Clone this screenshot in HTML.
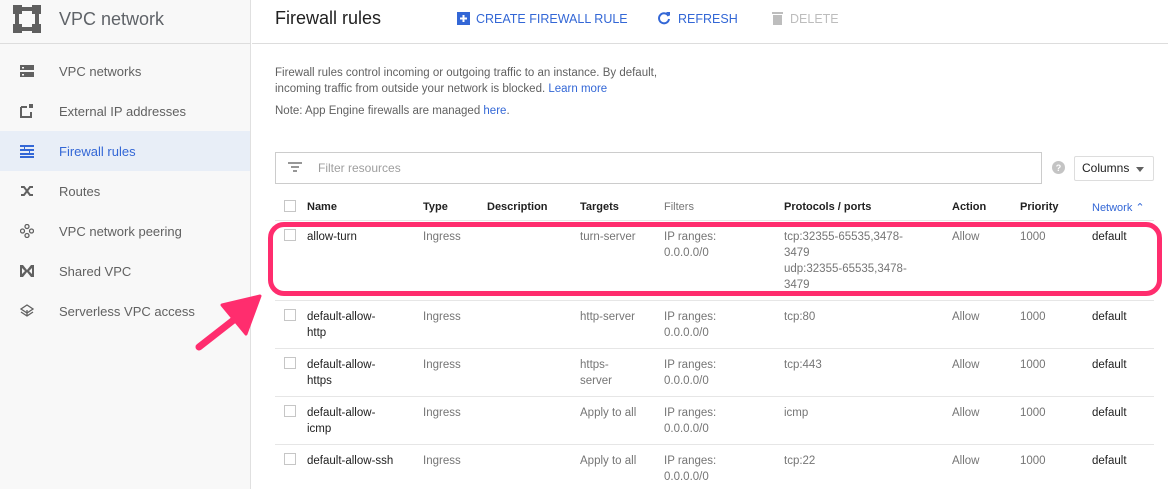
<!DOCTYPE html>
<html><head><meta charset="utf-8"><style>
*{margin:0;padding:0;box-sizing:border-box}
body{width:1168px;height:489px;overflow:hidden;background:#fff;font-family:"Liberation Sans",Arial,sans-serif;position:relative;color:#212121}
.a{position:absolute;white-space:nowrap}
#side{position:absolute;left:0;top:0;width:251px;height:489px;background:#f8f8f8;border-right:1px solid #e0e0e0}
.si{position:absolute;left:0;width:250px;height:40px;font-size:13px;color:#616161;line-height:40px}
.si span{position:absolute;left:59px;top:1px}
.si svg{position:absolute;left:20px;top:13px}
.t{font-size:11px;color:#212121}
.g{color:#757575}
.cb{position:absolute;width:12px;height:12px;border:1px solid #c6c6c6;background:#fff}
.hl{position:absolute;left:275px;width:879px;height:1px;background:#e6e6e6}
.lk{color:#3367d6}
</style></head><body>
<div id="side">
  <div class="a" style="left:0;top:43px;width:251px;height:1px;background:#ddd"></div>
  <svg class="a" style="left:13px;top:5px" width="28" height="28" viewBox="0 0 28 28" fill="#5f5f5f"><rect x="0" y="0" width="9" height="9"/><rect x="19" y="0" width="9" height="9"/><rect x="0" y="19" width="9" height="9"/><rect x="19" y="19" width="9" height="9"/><rect x="2" y="8" width="4" height="12"/><rect x="22" y="8" width="4" height="12"/><rect x="8" y="2" width="12" height="4"/><rect x="8" y="22" width="12" height="4"/></svg>
  <div class="a" style="left:59px;top:9px;font-size:18px;color:#5f6368">VPC network</div>
  <div class="si" style="top:51px"><svg width="14" height="14" viewBox="0 0 14 14" fill="#616161"><rect x="0" y="1" width="14" height="5"/><rect x="0" y="8" width="14" height="5"/><rect x="2" y="3" width="2" height="1.5" fill="#f8f8f8"/><rect x="2" y="10" width="2" height="1.5" fill="#f8f8f8"/></svg><span>VPC networks</span></div>
  <div class="si" style="top:91px"><svg width="14" height="14" viewBox="0 0 14 14" fill="none" stroke="#616161" stroke-width="2"><path d="M1 3v10h10V8M1 3h6"/><rect x="9" y="0" width="4" height="4" fill="#616161" stroke="none"/></svg><span>External IP addresses</span></div>
  <div class="si" style="top:131px;background:#e8eef7;color:#3367d6"><svg width="14" height="14" viewBox="0 0 14 14" fill="#3367d6"><rect x="0" y="1" width="14" height="2"/><rect x="0" y="5" width="14" height="2"/><rect x="0" y="9" width="14" height="2"/><rect x="0" y="12" width="14" height="2"/><rect x="4" y="3" width="1" height="2" /><rect x="9" y="7" width="1" height="2"/></svg><span>Firewall rules</span></div>
  <div class="si" style="top:171px"><svg width="14" height="14" viewBox="0 0 14 14" fill="none" stroke="#616161" stroke-width="2"><path d="M1 3h3l6 8h3M1 11h3l6-8h3"/></svg><span>Routes</span></div>
  <div class="si" style="top:211px"><svg width="14" height="14" viewBox="0 0 14 14" fill="none" stroke="#616161" stroke-width="1.3"><circle cx="7" cy="2.5" r="2"/><circle cx="2.5" cy="7" r="2"/><circle cx="11.5" cy="7" r="2"/><circle cx="7" cy="11.5" r="2"/></svg><span>VPC network peering</span></div>
  <div class="si" style="top:251px"><svg width="14" height="14" viewBox="0 0 14 14" fill="#616161"><path d="M0 1h3l4 5 4-5h3v12h-3l-4-5-4 5H0z M2 4v6l3-3z M12 4v6l-3-3z" fill-rule="evenodd"/></svg><span>Shared VPC</span></div>
  <div class="si" style="top:291px"><svg width="14" height="14" viewBox="0 0 14 14" fill="none" stroke="#616161" stroke-width="1.3"><path d="M7 1l6 4-6 4-6-4z M1 8l6 4 6-4 M7 6v6"/></svg><span>Serverless VPC access</span></div>
</div>
<div class="a" style="left:252px;top:43px;width:916px;height:1px;background:#ddd"></div>
<div class="a" style="left:275px;top:8px;font-size:18px;color:#212121">Firewall rules</div>
<svg class="a" style="left:457px;top:12px" width="13" height="13"><rect width="13" height="13" fill="#3367d6"/><path d="M6.5 3v7M3 6.5h7" stroke="#fff" stroke-width="2"/></svg>
<div class="a" style="left:476px;top:12px;font-size:12.5px;color:#3367d6">CREATE FIREWALL RULE</div>
<svg class="a" style="left:657px;top:11px" width="14" height="14" viewBox="0 0 14 14"><path d="M11.5 5A5 5 0 1 0 12 8" fill="none" stroke="#3367d6" stroke-width="2"/><path d="M9 1h4v4z" fill="#3367d6"/></svg>
<div class="a" style="left:678px;top:12px;font-size:12.5px;color:#3367d6">REFRESH</div>
<svg class="a" style="left:772px;top:11px" width="11" height="14"><rect x="0" y="1" width="11" height="2" fill="#bdbdbd"/><rect x="1" y="4" width="9" height="10" fill="#bdbdbd"/></svg>
<div class="a" style="left:790px;top:12px;font-size:12.5px;color:#bdbdbd">DELETE</div>
<div class="a" style="left:275px;top:65px;font-size:11.5px;color:#616161;line-height:16px;white-space:normal;width:415px">Firewall rules control incoming or outgoing traffic to an instance. By default, incoming traffic from outside your network is blocked. <span class="lk">Learn more</span></div>
<div class="a" style="left:275px;top:105px;font-size:11.5px;color:#616161">Note: App Engine firewalls are managed <span class="lk">here</span>.</div>
<div class="a" style="left:275px;top:152px;width:767px;height:32px;border:1px solid #ccc"></div>
<svg class="a" style="left:288px;top:162px" width="14" height="10"><path d="M0 1h14M3 5h8M5 9h4" stroke="#757575" stroke-width="1.5"/></svg>
<div class="a" style="left:318px;top:161px;font-size:12px;color:#9e9e9e">Filter resources</div>
<svg class="a" style="left:1052px;top:161px" width="13" height="13"><circle cx="6.5" cy="6.5" r="6.5" fill="#c4c4c4"/><text x="6.5" y="10" font-size="9" font-weight="bold" fill="#fff" text-anchor="middle" font-family="Liberation Sans">?</text></svg>
<div class="a" style="left:1074px;top:156px;width:80px;height:25px;border:1px solid #ddd;border-radius:2px;font-size:12px;color:#212121;line-height:23px;padding-left:7px">Columns <span style="position:absolute;right:9px;top:10px;border:4px solid transparent;border-top:5px solid #616161"></span></div>
<div class="cb" style="left:284px;top:200px"></div>
<div class="a t" style="left:307px;top:201px;font-weight:bold">Name</div>
<div class="a t" style="left:423px;top:201px;font-weight:bold">Type</div>
<div class="a t" style="left:487px;top:201px;font-weight:bold">Description</div>
<div class="a t" style="left:580px;top:201px;font-weight:bold">Targets</div>
<div class="a t g" style="left:664px;top:201px">Filters</div>
<div class="a t" style="left:784px;top:201px;font-weight:bold">Protocols / ports</div>
<div class="a t" style="left:952px;top:201px;font-weight:bold">Action</div>
<div class="a t" style="left:1020px;top:201px;font-weight:bold">Priority</div>
<div class="a t" style="left:1092px;top:201px;color:#3367d6">Network &#8963;</div>
<div class="hl" style="top:220px"></div>
<div class="hl" style="top:300px"></div>
<div class="hl" style="top:348px"></div>
<div class="hl" style="top:396px"></div>
<div class="hl" style="top:444px"></div>
<div style="position:absolute;left:0;top:0;font-size:11.5px;line-height:16px">
<div class="cb" style="left:284px;top:229px"></div>
<div class="a" style="left:307px;top:229px">allow-turn</div>
<div class="a g" style="left:423px;top:229px">Ingress</div>
<div class="a g" style="left:580px;top:229px">turn-server</div>
<div class="a g" style="left:664px;top:229px">IP ranges:<br>0.0.0.0/0</div>
<div class="a g" style="left:784px;top:229px">tcp:32355-65535,3478-<br>3479<br>udp:32355-65535,3478-<br>3479</div>
<div class="a g" style="left:952px;top:229px">Allow</div>
<div class="a g" style="left:1020px;top:229px">1000</div>
<div class="a" style="left:1092px;top:229px">default</div>

<div class="cb" style="left:284px;top:309px"></div>
<div class="a" style="left:307px;top:309px">default-allow-<br>http</div>
<div class="a g" style="left:423px;top:309px">Ingress</div>
<div class="a g" style="left:580px;top:309px">http-server</div>
<div class="a g" style="left:664px;top:309px">IP ranges:<br>0.0.0.0/0</div>
<div class="a g" style="left:784px;top:309px">tcp:80</div>
<div class="a g" style="left:952px;top:309px">Allow</div>
<div class="a g" style="left:1020px;top:309px">1000</div>
<div class="a" style="left:1092px;top:309px">default</div>

<div class="cb" style="left:284px;top:357px"></div>
<div class="a" style="left:307px;top:357px">default-allow-<br>https</div>
<div class="a g" style="left:423px;top:357px">Ingress</div>
<div class="a g" style="left:580px;top:357px">https-<br>server</div>
<div class="a g" style="left:664px;top:357px">IP ranges:<br>0.0.0.0/0</div>
<div class="a g" style="left:784px;top:357px">tcp:443</div>
<div class="a g" style="left:952px;top:357px">Allow</div>
<div class="a g" style="left:1020px;top:357px">1000</div>
<div class="a" style="left:1092px;top:357px">default</div>

<div class="cb" style="left:284px;top:405px"></div>
<div class="a" style="left:307px;top:405px">default-allow-<br>icmp</div>
<div class="a g" style="left:423px;top:405px">Ingress</div>
<div class="a g" style="left:580px;top:405px">Apply to all</div>
<div class="a g" style="left:664px;top:405px">IP ranges:<br>0.0.0.0/0</div>
<div class="a g" style="left:784px;top:405px">icmp</div>
<div class="a g" style="left:952px;top:405px">Allow</div>
<div class="a g" style="left:1020px;top:405px">1000</div>
<div class="a" style="left:1092px;top:405px">default</div>

<div class="cb" style="left:284px;top:453px"></div>
<div class="a" style="left:307px;top:453px">default-allow-ssh</div>
<div class="a g" style="left:423px;top:453px">Ingress</div>
<div class="a g" style="left:580px;top:453px">Apply to all</div>
<div class="a g" style="left:664px;top:453px">IP ranges:<br>0.0.0.0/0</div>
<div class="a g" style="left:784px;top:453px">tcp:22</div>
<div class="a g" style="left:952px;top:453px">Allow</div>
<div class="a g" style="left:1020px;top:453px">1000</div>
<div class="a" style="left:1092px;top:453px">default</div>
</div>
<div class="a" style="left:268px;top:222px;width:894px;height:74px;border:5px solid #ff2d6e;border-radius:16px"></div>
<svg class="a" style="left:190px;top:290px" width="80" height="70"><path d="M9 57L50 25" stroke="#ff2d6e" stroke-width="7" stroke-linecap="round"/><path d="M70 6L32 15L56 44z" fill="#ff2d6e" stroke="#ff2d6e" stroke-width="3" stroke-linejoin="round"/></svg>
</body></html>
